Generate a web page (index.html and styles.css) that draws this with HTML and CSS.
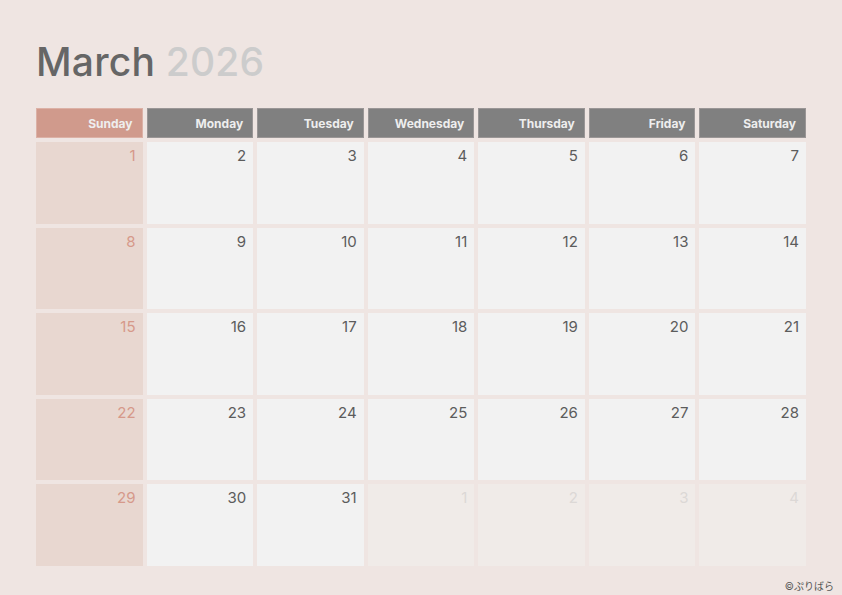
FILE: index.html
```html
<!DOCTYPE html>
<html lang="ja">
<head>
<meta charset="utf-8">
<title>March 2026</title>
<link rel="stylesheet" href="styles.css">
</head>
<body>
<div class="page">
  <h1 class="title"><span class="month">March</span> <span class="year">2026</span></h1>
  <div class="grid">
    <div class="head sun">Sunday</div>
    <div class="head">Monday</div>
    <div class="head">Tuesday</div>
    <div class="head">Wednesday</div>
    <div class="head">Thursday</div>
    <div class="head">Friday</div>
    <div class="head">Saturday</div>

    <div class="cell sun">1</div><div class="cell">2</div><div class="cell">3</div><div class="cell">4</div><div class="cell">5</div><div class="cell">6</div><div class="cell">7</div>
    <div class="cell sun">8</div><div class="cell">9</div><div class="cell">10</div><div class="cell">11</div><div class="cell">12</div><div class="cell">13</div><div class="cell">14</div>
    <div class="cell sun">15</div><div class="cell">16</div><div class="cell">17</div><div class="cell">18</div><div class="cell">19</div><div class="cell">20</div><div class="cell">21</div>
    <div class="cell sun">22</div><div class="cell">23</div><div class="cell">24</div><div class="cell">25</div><div class="cell">26</div><div class="cell">27</div><div class="cell">28</div>
    <div class="cell sun">29</div><div class="cell">30</div><div class="cell">31</div><div class="cell other">1</div><div class="cell other">2</div><div class="cell other">3</div><div class="cell other">4</div>
  </div>
  <div class="credit">©ぷりばら</div>
</div>
</body>
</html>
```
FILE: styles.css
```css
html, body {
  margin: 0;
  padding: 0;
}
body {
  background: #efe5e2;
  font-family: Inter, "Noto Sans", "Noto Sans CJK JP", sans-serif;
  width: 842px;
  height: 595px;
  overflow: hidden;
}
.page {
  padding: 42px 0 0 36px;
  box-sizing: border-box;
  height: 595px;
  display: flex;
  flex-direction: column;
}
.title {
  margin: 0;
  font-size: 39px;
  line-height: 39px;
  font-weight: 500;
  letter-spacing: 0.2px;
}
.month { color: #666666; }
.year { color: #cccccc; }
.grid {
  margin-top: 27px;
  width: 770px;
  height: 458px;
  display: grid;
  grid-template-columns: repeat(7, 1fr);
  grid-template-rows: 30px repeat(5, 1fr);
  gap: 4px;
}
.head {
  background: #808080;
  color: #eeeeee;
  font-size: 12px;
  font-weight: 700;
  display: flex;
  align-items: center;
  justify-content: flex-end;
  padding-right: 9px;
  border: 1px solid #9a9696;
}
.head.sun {
  background: #d09a8c;
  border-color: #dcb1a6;
}
.cell {
  background: #f2f2f2;
  color: #5c5c5c;
  font-size: 15px;
  line-height: 15px;
  text-align: right;
  padding: 6px 7px 0 0;
}
.cell.sun {
  background: #e8d7d0;
  color: #d6998a;
}
.cell.other {
  background: #f0ebe8;
  color: #dcd8d6;
}
.credit {
  margin-top: 12px;
  align-self: flex-end;
  padding-right: 8px;
  font-size: 10px;
  color: #555555;
}
```
